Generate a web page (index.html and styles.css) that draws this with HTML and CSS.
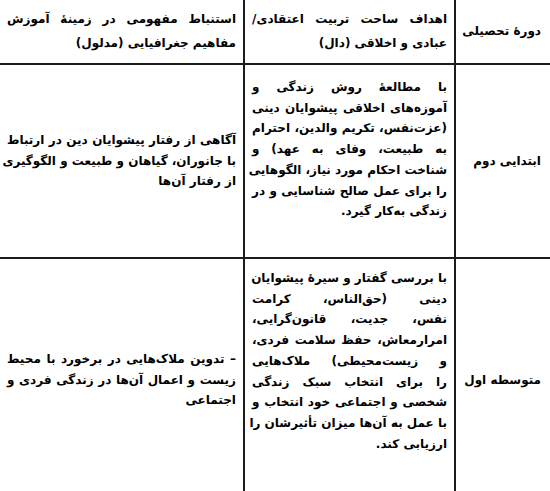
FILE: index.html
```html
<!DOCTYPE html>
<html lang="fa" dir="rtl">
<head>
<meta charset="utf-8">
<title>جدول اهداف</title>
<link rel="stylesheet" href="styles.css">
</head>
<body>
<div class="table">
  <div class="cell head side"><span class="ln last">دورهٔ تحصیلی</span></div>
  <div class="cell head mid">
    <span class="ln">اهداف ساحت تربیت اعتقادی/</span>
    <span class="ln last">عبادی و اخلاقی (دال)</span>
  </div>
  <div class="cell head wide">
    <span class="ln">استنباط مفهومی در زمینهٔ آموزش</span>
    <span class="ln last">مفاهیم جغرافیایی (مدلول)</span>
  </div>

  <div class="cell side"><span class="ln last">ابتدایی دوم</span></div>
  <div class="cell mid top r1">
    <span class="ln">با مطالعهٔ روش زندگی و</span>
    <span class="ln">آموزه‌های اخلاقی پیشوایان دینی</span>
    <span class="ln">(عزت‌نفس، تکریم والدین، احترام</span>
    <span class="ln">به طبیعت، وفای به عهد) و</span>
    <span class="ln">شناخت احکام مورد نیاز، الگوهایی</span>
    <span class="ln">را برای عمل صالح شناسایی و در</span>
    <span class="ln last">زندگی به‌کار گیرد.</span>
  </div>
  <div class="cell wide">
    <span class="ln">آگاهی از رفتار پیشوایان دین در ارتباط</span>
    <span class="ln">با جانوران، گیاهان و طبیعت و الگوگیری</span>
    <span class="ln last">از رفتار آن‌ها</span>
  </div>

  <div class="cell side"><span class="ln last">متوسطه اول</span></div>
  <div class="cell mid top r2">
    <span class="ln">با بررسی گفتار و سیرهٔ پیشوایان</span>
    <span class="ln">دینی (حق‌الناس، کرامت</span>
    <span class="ln">نفس، جدیت، قانون‌گرایی،</span>
    <span class="ln">امرارمعاش، حفظ سلامت فردی،</span>
    <span class="ln">و زیست‌محیطی) ملاک‌هایی</span>
    <span class="ln">را برای انتخاب سبک زندگی</span>
    <span class="ln">شخصی و اجتماعی خود انتخاب و</span>
    <span class="ln">با عمل به آن‌ها میزان تأثیرشان را</span>
    <span class="ln last">ارزیابی کند.</span>
  </div>
  <div class="cell wide">
    <span class="ln">– تدوین ملاک‌هایی در برخورد با محیط</span>
    <span class="ln">زیست و اعمال آن‌ها در زندگی فردی و</span>
    <span class="ln last">اجتماعی</span>
  </div>
</div>
</body>
</html>
```

FILE: styles.css
```css
html, body {
  margin: 0;
  padding: 0;
  background: #ffffff;
  overflow: hidden;
}

body {
  font-family: "DejaVu Sans", sans-serif;
  font-weight: bold;
  font-size: 12px;
  color: #000000;
  direction: rtl;
}

.table {
  display: grid;
  grid-template-columns: 94px 209px 243px;
  grid-template-rows: 63px 192px 242px;
  gap: 2px;
  background: #1c1c1c;
  width: 550px;
}

.cell {
  background: #ffffff;
  display: flex;
  flex-direction: column;
  justify-content: center;
  padding: 0 7px;
  line-height: 20.7px;
  min-width: 0;
}

.cell.top {
  justify-content: flex-start;
}

.r1 {
  padding-top: 12px;
}

.r2 {
  padding-top: 9px;
}

.head {
  line-height: 24px;
  padding-bottom: 2px;
}

.side {
  padding-right: 9px;
  padding-left: 4px;
}

.ln {
  display: block;
  white-space: nowrap;
  text-align: justify;
  text-align-last: justify;
}

.ln.last {
  text-align: right;
  text-align-last: right;
}
```
